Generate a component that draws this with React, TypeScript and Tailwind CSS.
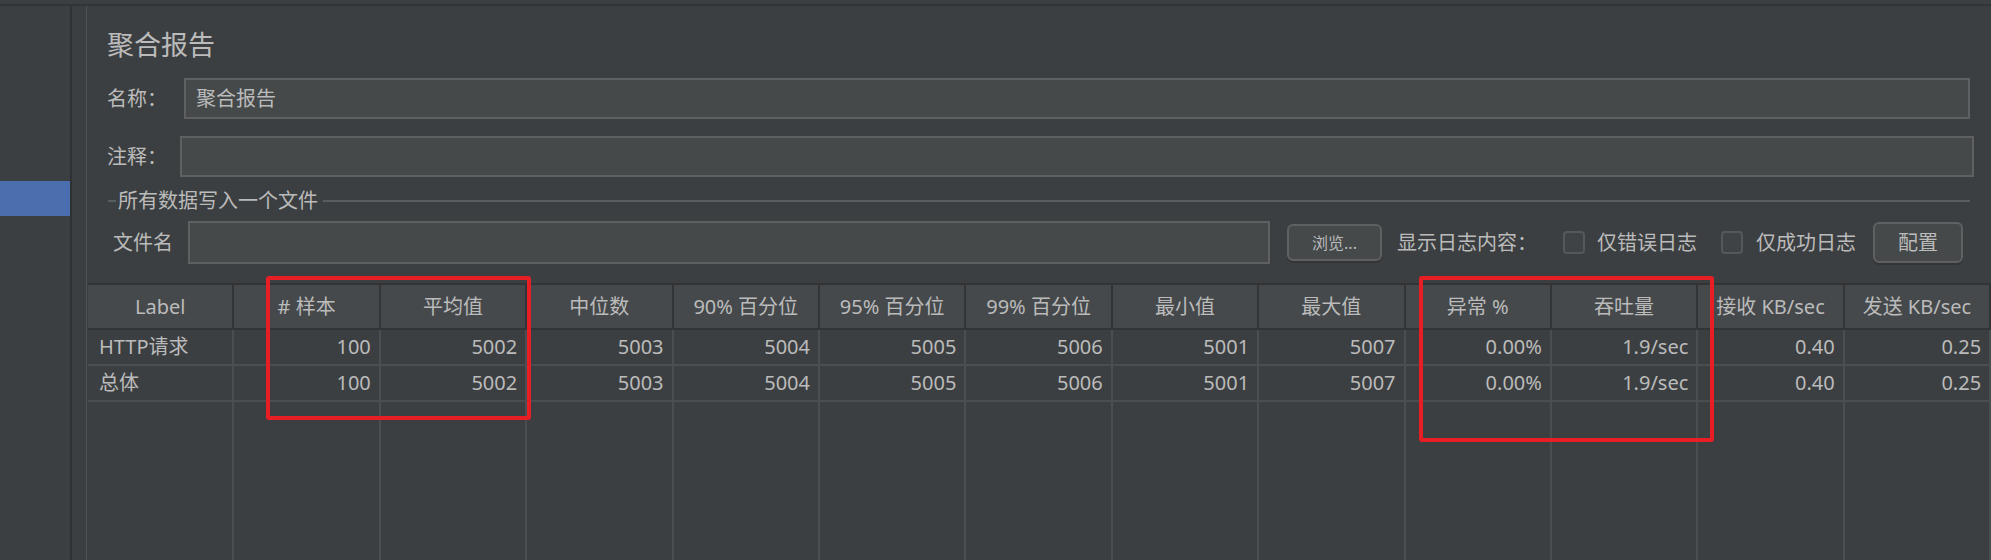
const columns = [
  'Label',
  '# 样本',
  '平均值',
  '中位数',
  '90% 百分位',
  '95% 百分位',
  '99% 百分位',
  '最小值',
  '最大值',
  '异常 %',
  '吞吐量',
  '接收 KB/sec',
  '发送 KB/sec',
];

const rows = [
  ['HTTP请求', '100', '5002', '5003', '5004', '5005', '5006', '5001', '5007', '0.00%', '1.9/sec', '0.40', '0.25'],
  ['总体', '100', '5002', '5003', '5004', '5005', '5006', '5001', '5007', '0.00%', '1.9/sec', '0.40', '0.25'],
];

function Checkbox() {
  return <span className="h-[23px] w-[22px] shrink-0 rounded-[4px] border-2 border-[#55585a] bg-[#3f4345]" />;
}

function ResultTable() {
  return (
    <div className="ml-[1px] flex flex-1 border-t-2 border-[#323436]">
      {columns.map((col, ci) => (
        <div key={col} className="flex flex-1 flex-col">
          <div className="flex h-[45px] items-center justify-center border-r-2 border-b-2 border-[#323436] bg-[#45494b]">
            {col}
          </div>
          <div className="flex flex-1 flex-col border-r-2 border-[#4b4e50]">
            {rows.map((r, ri) => (
              <div
                key={ri}
                className={`flex h-[36px] items-center border-b-2 border-[#4b4e50] ${
                  ci === 0 ? 'justify-start pl-[11px]' : 'justify-end pr-[8px]'
                }`}
              >
                {r[ci]}
              </div>
            ))}
          </div>
        </div>
      ))}
    </div>
  );
}

export default function App() {
  return (
    <div
      className="relative flex h-[560px] w-[1991px] flex-col overflow-hidden bg-[#3c3f41] text-[20px] text-[#bbbbbb]"
      style={{ fontFamily: '"Noto Sans", "Noto Sans CJK SC", sans-serif' }}
    >
      <div className="h-[6px] shrink-0 border-b-2 border-[#323436]" />
      <div className="flex min-h-0 flex-1">
        {/* tree sidebar */}
        <div className="w-[70px] shrink-0">
          <div className="mt-[175px] h-[35px] bg-[#4b6eaf]" />
        </div>
        <div className="w-[2px] shrink-0 bg-[#2f3133]" />
        <div className="w-[14px] shrink-0" />
        <div className="w-[1px] shrink-0 bg-[#505355]" />

        {/* content */}
        <div className="flex min-w-0 flex-1 flex-col">
          <div className="mt-[20px] flex h-[38px] items-center pl-[20px] text-[27px]">聚合报告</div>

          <div className="mt-[14px] flex h-[41px] items-center pr-[21px]">
            <span className="w-[97px] shrink-0 pl-[20px]">名称：</span>
            <div className="flex h-full flex-1 items-center border-2 border-[#5e6062] bg-[#45494a] pl-[10px]">
              聚合报告
            </div>
          </div>

          <div className="mt-[17px] flex h-[41px] items-center pr-[17px]">
            <span className="w-[93px] shrink-0 pl-[20px]">注释：</span>
            <div className="h-full flex-1 border-2 border-[#5e6062] bg-[#45494a]" />
          </div>

          <div className="mt-[14px] flex h-[20px] items-center pl-[21px] pr-[21px]">
            <span className="h-[2px] w-[8px] bg-[#5a5d5f]" />
            <span className="px-[2px]">所有数据写入一个文件</span>
            <span className="ml-[3px] h-[2px] flex-1 bg-[#5a5d5f]" />
          </div>

          <div className="mt-[10px] flex h-[43px] items-center">
            <span className="w-[101px] shrink-0 pl-[26px]">文件名</span>
            <div className="h-full w-[1082px] shrink-0 border-2 border-[#5e6062] bg-[#45494a]" />
            <button className="ml-[17px] flex h-[37px] w-[95px] shrink-0 items-center justify-center rounded-[6px] border-2 border-[#5e6062] bg-[#45494a] text-[16px] text-[#bbbbbb] shadow-[0_2px_0_#333537]">
              浏览...
            </button>
            <span className="ml-[15px] w-[166px] shrink-0">显示日志内容：</span>
            <Checkbox />
            <span className="ml-[12px] w-[124px] shrink-0">仅错误日志</span>
            <Checkbox />
            <span className="ml-[13px] w-[117px] shrink-0">仅成功日志</span>
            <button className="flex h-[41px] w-[90px] shrink-0 items-center justify-center rounded-[6px] border-2 border-[#5e6062] bg-[#45494a] text-[20px] text-[#bbbbbb] shadow-[0_2px_0_#333537]">
              配置
            </button>
          </div>

          <div className="mt-[19px] flex min-h-0 flex-1">
            <ResultTable />
          </div>
        </div>
      </div>

      {/* red annotation boxes */}
      <div className="absolute left-[266px] top-[276px] h-[144px] w-[265px] rounded-[3px] border-4 border-[#e81e25]" />
      <div className="absolute left-[1419px] top-[276px] h-[166px] w-[295px] rounded-[3px] border-4 border-[#e81e25]" />
    </div>
  );
}
